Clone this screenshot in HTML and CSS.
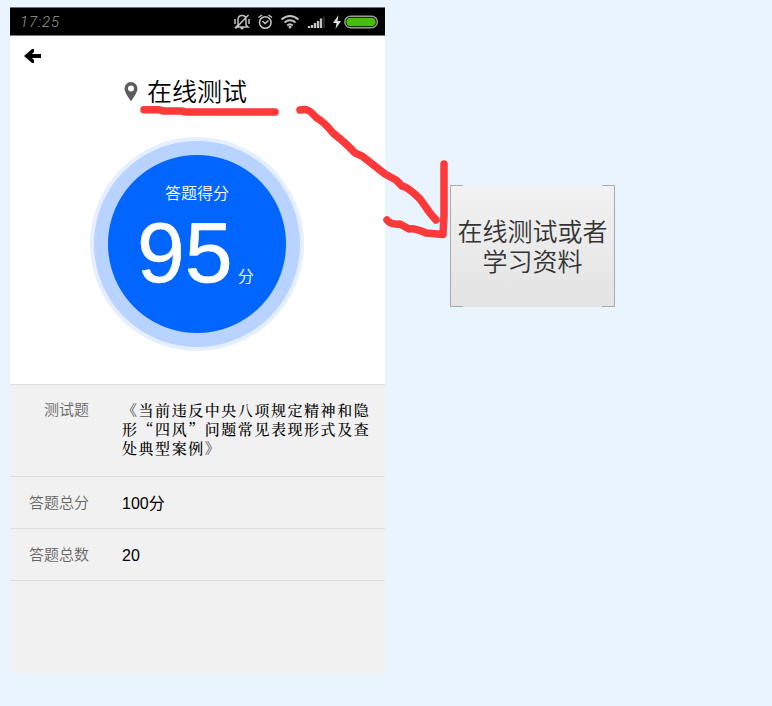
FILE: index.html
```html
<!DOCTYPE html>
<html lang="zh-CN">
<head>
<meta charset="utf-8">
<title>在线测试</title>
<link rel="stylesheet" href="styles.css">
</head>
<body>
<main class="board">
  <section class="phone">
    <header class="status">
      <span class="clock">17:25</span>
      <svg class="indicators" width="150" height="26" viewBox="0 0 150 26" fill="none" stroke="#c4c4c4" stroke-width="1.5">
        <path d="M8 16V11Q8 6.500 12 6.500T16 11v5l2 2H6ZM10.500 19.500h3M5.500 19.500 18.500 6M5 10v5M19 10v5"/>
        <circle cx="35.300" cy="13.500" r="5.800"/><path d="m32.500 12 2.500 2.500 3.500-3M28.500 8.500 32 6M38.500 6 42 8.500"/>
        <path d="M51.500 10.500Q60 3.500 68.500 10.500M54.500 13.500Q60 9 65.500 13.500M57.200 16.500Q60 14 62.800 16.500" stroke-width="1.900"/><circle cx="60" cy="18" r="1.500" fill="#c4c4c4" stroke="none"/>
        <path d="M79 19v-2M82 19v-3M85 19v-5M88 19v-7M91 19V9.500" stroke-width="2.300"/><path d="M94 19V7.500" stroke="#333"/>
        <path d="M108.500 6 103 14h3.500l-1 6 5.500-8h-3.500Z" fill="#ddd" stroke="none"/>
        <rect x="114.800" y="7.200" width="32.500" height="11.500" rx="5.700" stroke="#999"/><rect x="116.200" y="8.700" width="29.600" height="8.600" rx="4.300" fill="#48be08" stroke="none"/>
      </svg>
    </header>
    <div class="nav">
      <svg width="18" height="16" viewBox="0 0 18 16"><path d="m0 8 8-7h2v3L8 6h9v4H8l2 2v3H8Z"/></svg>
    </div>
    <h1 class="title">
      <svg width="14" height="19" viewBox="0 0 14 19"><path fill="#5c5c5c" fill-rule="evenodd" d="M7 0a6.500 6.500 0 0 0-6.500 6.500C.5 11 7 19 7 19s6.500-8 6.500-12.500A6.500 6.500 0 0 0 7 0Zm0 3.500a3 3 0 1 1 0 6 3 3 0 0 1 0-6Z"/></svg>
      <span>在线测试</span>
    </h1>
    <div class="score">
      <div class="score-label">答题得分</div>
      <div class="score-line"><span class="number">95</span><span class="unit">分</span></div>
    </div>
    <dl class="details">
      <div class="row topic"><dt>测试题</dt><dd>《当前违反中央八项规定精神和隐<br>形“四风”问题常见表现形式及查<br>处典型案例》</dd></div>
      <div class="row"><dt>答题总分</dt><dd class="points">100分</dd></div>
      <div class="row"><dt>答题总数</dt><dd>20</dd></div>
    </dl>
  </section>
  <aside class="note">在线测试或者<br>学习资料</aside>
  <svg class="marks" width="772" height="706" viewBox="0 0 772 706">
    <path d="M144 109.800H159L164 111H181L186 112H275"/>
    <path d="M300 110C310 108 311 113 317 118Q324 122 333 133Q348 145 355 153L362 156L385 174L396 180L402 186Q408 187 420 199L430 213L436 220"/>
    <path d="M387 220Q391 225 400 224L409 229Q415 228 426 233L443 234.500L444 215V164"/>
  </svg>
</main>
</body>
</html>
```
FILE: styles.css
```css
* { box-sizing: border-box; }
body {
  margin: 0;
  background: #e9f4ff;
  color: #000;
  font-family: "Liberation Sans", "Noto Sans CJK SC", sans-serif;
}
.board {
  position: relative;
  display: flex;
  align-items: flex-start;
  gap: 65px;
  width: 772px;
  height: 706px;
  padding: 7px 10px;
}
.phone {
  display: flex;
  flex-direction: column;
  width: 375px;
  height: 666px;
  background: #fff;
}
.status {
  display: flex;
  align-items: center;
  justify-content: space-between;
  height: 29px;
  padding: 0 5px 0 10px;
  background: #000;
  border-top: 1px solid #67717b;
  border-bottom: 1px solid #777;
}
.clock {
  color: #999;
  font: italic 300 15px/20px Roboto, sans-serif;
  letter-spacing: 0.900px;
}
.nav {
  height: 37px;
  padding: 12px 14px;
}
.nav svg { display: block; }
.title {
  display: flex;
  align-items: center;
  gap: 9px;
  height: 36px;
  margin: 0;
  padding-left: 114px;
  font: 350 25px/36px "Noto Sans CJK SC", sans-serif;
}
.title span { margin-top: -2px; }
.score {
  width: 214px;
  height: 214px;
  margin: 28px 0 0 80px;
  padding-top: 43px;
  border-radius: 50%;
  background: radial-gradient(circle, #06f 0 88.500px, #b8d3ff 89.500px 102.500px, #e5efff 103.500px);
  color: #fff;
}
.score-label {
  text-align: center;
  font: 350 16px/24px "Noto Sans CJK SC", sans-serif;
}
.score-line {
  display: flex;
  align-items: baseline;
  padding-left: 47px;
  gap: 5px;
}
.number {
  font-size: 86px;
  line-height: 96px;
  -webkit-text-stroke: 0.600px #fff;
}
.unit { font: 350 16px/24px "Noto Sans CJK SC", sans-serif; }
.details {
  flex: 1;
  margin: 33px 0 0;
  background: #f1f1f1;
  border-top: 1px solid #ddd;
}
.row {
  display: flex;
  align-items: center;
  gap: 33px;
  height: 52px;
  border-bottom: 1px solid #ddd;
}
.row dt {
  width: 79px;
  margin-top: -2px;
  text-align: right;
  color: #666;
  font: 350 15px/24px "Noto Sans CJK SC", sans-serif;
}
.row dd { margin: 2px 0 0; font-size: 16px; line-height: 22px; }
.topic {
  align-items: flex-start;
  height: 92px;
  padding-top: 13px;
}
.topic dt { margin-top: -1px; }
.topic dd {
  margin-top: 2px;
  font: 500 15px/19px "Noto Serif CJK SC", "Noto Sans CJK SC", serif;
  letter-spacing: 1.550px;
  white-space: nowrap;
}
.note {
  width: 165px;
  height: 122px;
  margin-top: 178px;
  padding-top: 30px;
  text-align: center;
  white-space: nowrap;
  color: #333;
  font: 350 25px/30px "Noto Sans CJK SC", sans-serif;
  border: 1px solid #aaa;
  border-width: 0 1px;
  background:
    linear-gradient(#aaa, #aaa) left top / 12px 1px no-repeat,
    linear-gradient(#aaa, #aaa) right top / 12px 1px no-repeat,
    linear-gradient(#aaa, #aaa) left bottom / 12px 1px no-repeat,
    linear-gradient(#aaa, #aaa) right bottom / 12px 1px no-repeat,
    linear-gradient(#f2f2f2, #e3e3e3);
}
.marks {
  position: absolute;
  inset: 0;
  pointer-events: none;
  fill: none;
  stroke: #fd3939;
  stroke-width: 7.500px;
  stroke-linecap: round;
  stroke-linejoin: round;
}
```
